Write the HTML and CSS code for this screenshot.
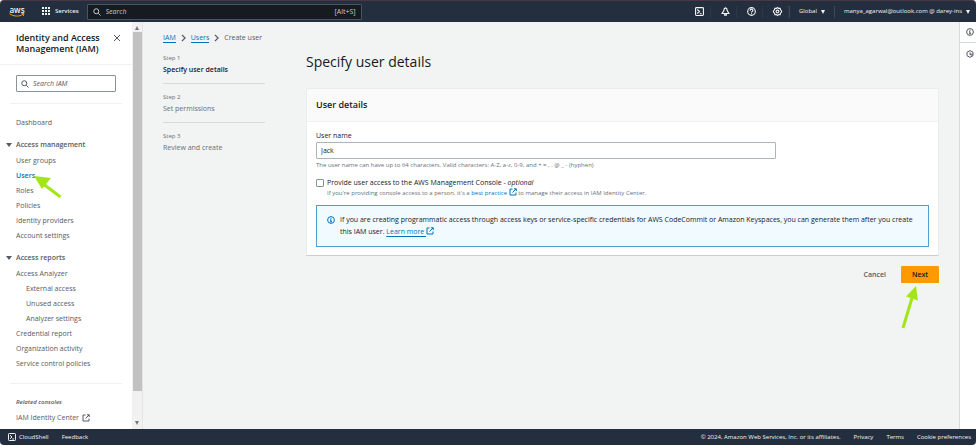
FILE: index.html
```html
<!DOCTYPE html>
<html lang="en">
<head>
<meta charset="utf-8">
<meta name="viewport" content="width=device-width, initial-scale=1">
<title>Create user | IAM</title>
<link rel="stylesheet" href="styles.css">
</head>
<body>
<svg class="sprite" aria-hidden="true">
  <symbol id="external" viewBox="0 0 16 16"><path d="M7 2H2v12h12V9M10 1.500h4.500V6M14 2 7 9"/></symbol>
  <symbol id="search" viewBox="0 0 16 16"><circle cx="6.500" cy="6.500" r="5"/><path d="m10.500 10.500 4.500 4.500"/></symbol>
  <symbol id="shell" viewBox="0 0 16 16"><rect x="1" y="1" width="14" height="14" rx="1.500"/><path d="m4 4.500 4 3.500-4 3.500M8.500 12H12"/></symbol>
  <symbol id="chevron" viewBox="0 0 8 12"><path d="m1.500 1 5 5-5 5"/></symbol>
  <symbol id="info" viewBox="0 0 16 16"><circle cx="8" cy="8" r="6.800"/><path d="M8 3.600v2M6 7.500h2v4M5.800 11.500h4.400"/></symbol>
</svg>

<header class="topbar">
  <a class="logo" href="#" aria-label="AWS home">
    <span class="logo-text">aws</span>
    <svg class="smile" viewBox="0 0 32 8"><path d="M1 1.500c9 6 20 6 27 1M25 1.500l5-.5-1.500 5"/></svg>
  </a>
  <button class="services" type="button">
    <svg class="grid-icon" viewBox="0 0 9 9"><path d="M0 0h2v2H0zM3 0h2v2H3zM6 0h2v2H6zM0 3h2v2H0zM3 3h2v2H3zM6 3h2v2H6zM0 6h2v2H0zM3 6h2v2H3zM6 6h2v2H6z"/></svg>
    Services
  </button>
  <label class="global-search">
    <svg class="icon"><use href="#search"/></svg>
    <input type="search" placeholder="Search" aria-label="Search">
    <span class="shortcut">[Alt+S]</span>
  </label>
  <nav class="tools" aria-label="Account tools">
    <button class="tool" type="button" aria-label="CloudShell"><svg class="tool-icon"><use href="#shell"/></svg></button>
    <button class="tool" type="button" aria-label="Notifications"><svg class="tool-icon" viewBox="0 0 16 16"><path d="M8 1.500C5.500 2 5 4 5 6.500L2 11.500h12l-3-5C11 4 10.500 2 8 1.500zM6.500 12v2.500h3V12"/></svg></button>
    <button class="tool" type="button" aria-label="Help"><svg class="tool-icon" viewBox="0 0 16 16"><circle cx="8" cy="8" r="6.800"/><path d="M5.500 6.500C5.500 3 10.500 3 10.500 6.200 10.500 8 8 7.800 8 9.800M8 11v2"/></svg></button>
    <button class="tool" type="button" aria-label="Settings"><svg class="tool-icon" viewBox="0 0 16 16"><path d="m8 1 2 1.500 2.700-.2.600 2.600L15.200 7v2l-1.900 2-.6 2.700-2.700-.2L8 15l-2-1.500-2.700.2-.6-2.700L.8 9V7l1.900-2.100.6-2.600 2.700.2z"/><circle cx="8" cy="8" r="2.500"/></svg></button>
    <button class="menu region" type="button">Global <span class="caret"></span></button>
    <button class="menu account" type="button">manya_agarwal@outlook.com @ darey-ins <span class="caret"></span></button>
  </nav>
</header>

<div class="shell">
  <aside class="sidebar">
    <div class="side-content">
      <div class="side-head">
        <h2>Identity and Access Management (IAM)</h2>
        <button class="close" type="button" aria-label="Close navigation"><svg viewBox="0 0 8 8"><path d="m1 1 6 6M7 1 1 7"/></svg></button>
      </div>
      <label class="side-search">
        <svg class="icon"><use href="#search"/></svg>
        <input type="search" placeholder="Search IAM" aria-label="Search IAM">
      </label>
      <nav class="side-nav" aria-label="IAM">
        <a class="dashboard" href="#">Dashboard</a>
        <h3><span class="caret"></span>Access management</h3>
        <ul>
          <li><a href="#">User groups</a></li>
          <li><a class="current" href="#" aria-current="page">Users<svg class="arrow arrow-users" viewBox="0 0 28 23" aria-hidden="true"><path class="shaft" d="M26.500 21 10 8.500"/><path class="head" d="M0 0 17 2 8 13z"/></svg></a></li>
          <li><a href="#">Roles</a></li>
          <li><a href="#">Policies</a></li>
          <li><a href="#">Identity providers</a></li>
          <li><a href="#">Account settings</a></li>
        </ul>
        <h3><span class="caret"></span>Access reports</h3>
        <ul>
          <li><a href="#">Access Analyzer</a>
            <ul>
              <li><a href="#">External access</a></li>
              <li><a href="#">Unused access</a></li>
              <li><a href="#">Analyzer settings</a></li>
            </ul>
          </li>
          <li><a href="#">Credential report</a></li>
          <li><a href="#">Organization activity</a></li>
          <li><a href="#">Service control policies</a></li>
        </ul>
      </nav>
      <div class="related">
        <h4>Related consoles</h4>
        <a href="#">IAM Identity Center <svg class="icon"><use href="#external"/></svg></a>
      </div>
    </div>
    <div class="scrollbar" aria-hidden="true">
      <span class="caret up"></span><span class="thumb"></span><span class="caret down"></span>
    </div>
  </aside>

  <main>
    <nav class="breadcrumbs" aria-label="Breadcrumbs">
      <a href="#">IAM</a><svg><use href="#chevron"/></svg><a href="#">Users</a><svg><use href="#chevron"/></svg><span>Create user</span>
    </nav>
    <div class="wizard">
      <ol class="steps">
        <li class="active"><small>Step 1</small><span>Specify user details</span></li>
        <li><small>Step 2</small><span>Set permissions</span></li>
        <li><small>Step 3</small><span>Review and create</span></li>
      </ol>
      <form class="form">
        <h1>Specify user details</h1>
        <section class="card">
          <h2>User details</h2>
          <div class="card-body">
            <label class="field-label" for="username">User name</label>
            <input class="text-input" id="username" type="text" value="Jack">
            <p class="hint">The user name can have up to 64 characters. Valid characters: A-Z, a-z, 0-9, and + = , . @ _ - (hyphen)</p>
            <div class="check">
              <input id="console" type="checkbox">
              <div>
                <label for="console">Provide user access to the AWS Management Console - <em>optional</em></label>
                <p class="hint">If you're providing console access to a person, it's a <a href="#">best practice <svg class="icon"><use href="#external"/></svg></a> to manage their access in IAM Identity Center.</p>
              </div>
            </div>
            <div class="alert">
              <svg class="icon"><use href="#info"/></svg>
              <p>If you are creating programmatic access through access keys or service-specific credentials for AWS CodeCommit or Amazon Keyspaces, you can generate them after you create this IAM user. <a href="#">Learn more <svg class="icon"><use href="#external"/></svg></a></p>
            </div>
          </div>
        </section>
        <div class="actions">
          <button class="cancel" type="button">Cancel</button>
          <button class="next" type="button">Next<svg class="arrow arrow-next" viewBox="0 0 18 44" aria-hidden="true"><path class="shaft" d="M2 42 11 12"/><path class="head" d="M15 0 5 10.500l12 4z"/></svg></button>
        </div>
      </form>
    </div>
  </main>

  <aside class="help-rail">
    <button type="button" aria-label="Info"><svg class="icon"><use href="#info"/></svg></button>
    <button type="button" aria-label="Tutorials"><svg class="icon" viewBox="0 0 16 16"><path d="m8 1.200 6 3.400v6.800l-6 3.400-6-3.400V4.600zM8 5v3.500h6M8 8.500l3 3"/></svg></button>
  </aside>
</div>

<footer class="bottombar">
  <a class="cloudshell" href="#"><svg><use href="#shell"/></svg>CloudShell</a>
  <a href="#">Feedback</a>
  <span class="copyright">© 2024, Amazon Web Services, Inc. or its affiliates.</span>
  <a href="#">Privacy</a>
  <a href="#">Terms</a>
  <a href="#">Cookie preferences</a>
</footer>
</body>
</html>
```
FILE: styles.css
```css
* { box-sizing: border-box; }
body {
  margin: 0;
  min-height: 100vh;
  display: flex;
  flex-direction: column;
  padding-bottom: 1px;
  background: #fff;
  color: #16191f;
  font: 7px/11px "Open Sans", "Noto Sans", sans-serif;
}
h1, h2, h3, h4, p, ul, ol { margin: 0; padding: 0; }
ul, ol { list-style: none; }
button, input { font: inherit; color: inherit; }
button { border: 0; padding: 0; background: none; }
a { color: inherit; text-decoration: none; }
input::placeholder { color: inherit; font-style: italic; opacity: 1; }
input[type="search"] { flex: 1; min-width: 0; border: 0; padding: 0; background: none; outline: 0; }
svg { fill: none; stroke: currentColor; stroke-width: 2; flex: none; overflow: visible; }
.sprite { position: absolute; width: 0; height: 0; }
.icon { width: 8px; height: 8px; }
.caret {
  display: inline-block;
  flex: none;
  border: 2px solid transparent;
  border-top: 4px solid currentColor;
  border-bottom: 0;
}

/* Top bar */
.topbar {
  height: 22px;
  flex: none;
  display: flex;
  align-items: center;
  border-top: 1px solid #4b3645;
  border-radius: 4px 4px 0 0;
  background: #232f3e;
  color: #f2f3f3;
  font-size: 6px;
}
.logo { width: 16px; margin-left: 9px; display: flex; flex-direction: column; align-items: center; }
.logo-text { font-size: 8px; line-height: 7px; font-weight: 600; }
.smile { width: 16px; height: 4px; stroke: #f90; }
.services { display: flex; align-items: center; gap: 4px; margin-left: 17px; font-weight: 600; }
.grid-icon { width: 9px; height: 9px; fill: currentColor; stroke: none; }
.global-search {
  width: 275px;
  height: 16px;
  margin-left: 8px;
  padding: 0 5px;
  display: flex;
  align-items: center;
  gap: 5px;
  border: 1px solid #4a5561;
  border-radius: 1px;
  background: #161b22;
  color: #c4c8cb;
  font-size: 7px;
}
.tools { margin-left: auto; display: flex; align-items: center; }
.tool { width: 26px; height: 12px; padding-left: 5px; display: grid; place-items: center; border-right: 1px solid #2c3847; }
.tool-icon { width: 9px; height: 9px; }
.menu { display: flex; align-items: center; gap: 4px; height: 12px; border-left: 1px solid #3e4957; }
.region { padding: 0 9px; }
.account { padding: 0 6px 0 9px; }

/* Page frame */
.shell { flex: 1; display: flex; background: #f2f3f3; }
main { flex: 1; min-width: 0; padding: 10px 20px; }

/* Sidebar */
.sidebar { width: 143px; flex: none; display: flex; background: #fff; color: #545b64; border-right: 1px solid #e3e5e6; }
.side-content { flex: 1; min-width: 0; }
.side-head {
  display: flex;
  align-items: flex-start;
  justify-content: space-between;
  padding: 10px 11px 10px 16px;
  border-bottom: 1px solid #f0f1f1;
}
.side-head h2 { width: 90px; font-size: 9px; line-height: 11px; font-weight: 600; color: #16191f; }
.close { padding: 2px 0; line-height: 0; }
.close svg { width: 8px; height: 8px; stroke-width: 1; }
.side-search {
  height: 17px;
  margin: 10px 16px 11px;
  padding: 0 4px;
  display: flex;
  align-items: center;
  gap: 4px;
  border: 1px solid #879596;
  border-radius: 1px;
}
.side-nav { margin: 0 10px; padding: 11px 0 12px; border-top: 1px solid #f0f1f1; }
.side-nav a { display: block; line-height: 15px; }
.side-nav ul a, .dashboard { padding-left: 6px; }
.side-nav ul ul { padding-left: 10px; }
.side-nav h3 {
  display: flex;
  align-items: center;
  gap: 4px;
  margin: 7px 0 0 -4px;
  font-size: 7px;
  line-height: 16px;
  font-weight: 600;
}
.side-nav .caret { border-width: 4px 3px 0; }
.side-nav .current { width: fit-content; position: relative; color: #0073bb; font-weight: 600; }
.related { margin: 0 10px; padding: 11px 6px 0; border-top: 1px solid #f0f1f1; line-height: 15px; }
.related h4 { font-size: 6px; font-style: italic; font-weight: 600; }
.related a { display: flex; align-items: center; gap: 3px; }
.scrollbar {
  width: 10px;
  flex: none;
  display: flex;
  flex-direction: column;
  align-items: center;
  padding: 4px 0;
  background: #f1f1f1;
}
.thumb { width: 9px; flex: 1; margin: 2px 0 30px; background: #c1c1c1; }
.scrollbar .caret { color: #777; }
.up { transform: rotate(180deg); }

/* Breadcrumbs and steps */
.breadcrumbs { display: flex; align-items: center; gap: 5px; color: #545b64; font-weight: 500; }
.breadcrumbs a { color: #0073bb; border-bottom: 1px solid #0073bb; font-weight: 400; line-height: 9px; }
.breadcrumbs svg { width: 5px; height: 8px; }
.wizard { display: grid; grid-template-columns: 102px minmax(0, 1fr); column-gap: 41px; }
.steps { padding-top: 9px; color: #687078; }
.steps li { padding-bottom: 7px; margin-bottom: 7px; border-bottom: 1px solid #d5dbdb; }
.steps li:last-child { border: 0; }
.steps small, .steps span { display: block; font-size: 6px; }
.steps small { line-height: 12px; }
.steps span { font-size: 7px; line-height: 12px; }
.steps .active span { color: #16191f; font-weight: 600; }

/* Form */
h1 { margin: 9px 0 16px; font-size: 14px; line-height: 20px; font-weight: 400; }
.card { background: #fff; border: 1px solid #eaeded; border-bottom-color: #c9cdce; }
.card h2 { padding: 0 9px; font-size: 9px; line-height: 32px; font-weight: 600; background: #fafafa; border-bottom: 1px solid #f0f1f1; }
.card-body { padding: 8px 9px; }
.field-label { display: block; margin-bottom: 1px; }
.text-input {
  display: block;
  width: 75%;
  height: 17px;
  padding: 0 4px;
  border: 1px solid #aab7b8;
  border-radius: 1px;
  background: #fff;
}
.hint { font-size: 6px; color: #687078; line-height: 10px; }
.text-input + .hint { margin: 1px 0 8px; }
.check { display: flex; gap: 3px; }
.check input {
  appearance: none;
  flex: none;
  width: 8px;
  height: 8px;
  margin: 1px 0;
  border: 1px solid #879596;
  border-radius: 1px;
}
.check label { display: block; line-height: 10px; }
.check a, .alert a { color: #0073bb; white-space: nowrap; }
.check .icon, .alert a .icon { vertical-align: -1px; }
.alert {
  display: flex;
  gap: 5px;
  margin-top: 7px;
  padding: 8px 10px;
  border: 1px solid #4f9fd1;
  background: #f1faff;
  line-height: 12px;
}
.alert > .icon { margin: 2px 0; color: #0073bb; }
.alert a { text-decoration: underline; text-underline-offset: 2px; }
.actions { display: flex; justify-content: flex-end; gap: 15px; margin-top: 10px; font-weight: 600; }
.cancel { color: #545b64; }
.next { position: relative; width: 38px; height: 17px; border-radius: 1px; background: #ff9900; }

/* Pointer arrows */
.arrow { position: absolute; color: #a2e619; stroke-width: 3; }
.arrow .head { fill: currentColor; stroke: none; }
.arrow-users { width: 28px; height: 23px; left: 24px; top: 8px; }
.arrow-next { width: 18px; height: 44px; left: 0; top: 20px; }

/* Right rail */
.help-rail { width: 17px; flex: none; background: #fff; border-left: 1px solid #d5dbdb; color: #545b64; }
.help-rail button { display: grid; place-items: center; width: 100%; height: 21px; padding-left: 3px; border-bottom: 1px solid #d5dbdb; }
.help-rail button:last-child { border: 0; }

/* Footer */
.bottombar {
  height: 16px;
  flex: none;
  display: flex;
  align-items: center;
  gap: 13px;
  padding: 0 5px 0 8px;
  border-radius: 0 0 4px 4px;
  background: #232f3e;
  color: #f2f3f3;
  font-size: 6px;
}
.cloudshell { display: flex; align-items: center; gap: 3px; }
.cloudshell svg { width: 8px; height: 8px; }
.copyright { margin-left: auto; }
```
